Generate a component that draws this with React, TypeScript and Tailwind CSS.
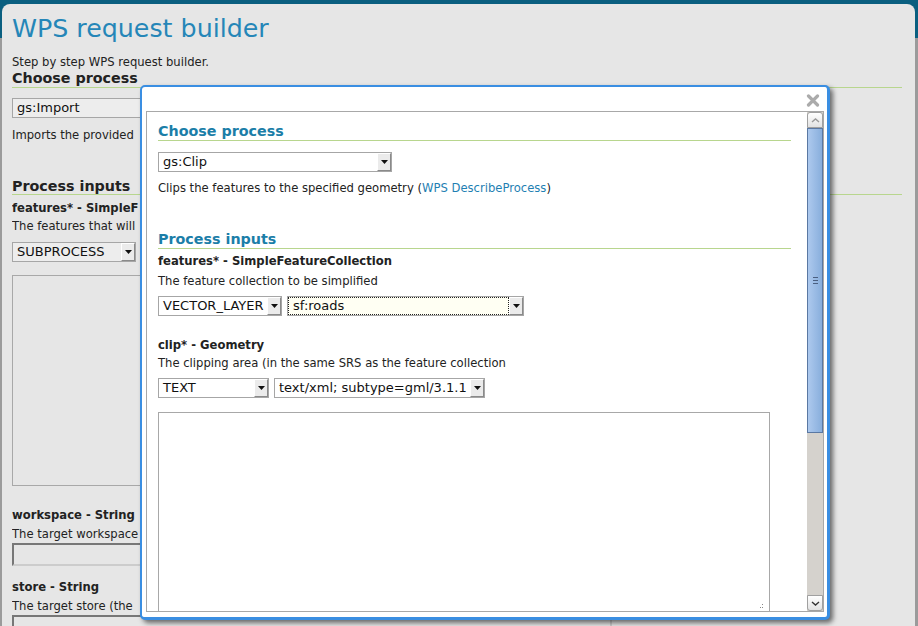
import React from "react";

function Arrow() {
  return (
    <div className="flex h-full w-[14px] shrink-0 items-center justify-center border border-t-white border-l-white border-r-[#8a8a8a] border-b-[#8a8a8a] bg-[#ebebeb]">
      <svg width="7" height="4" viewBox="0 0 7 4">
        <path d="M0 0h7L3.5 4z" fill="#111" />
      </svg>
    </div>
  );
}

function Select({ className, text, focus, bg }: { className: string; text: string; focus?: boolean; bg?: string }) {
  return (
    <div className={`flex h-[20px] shrink-0 border border-[#a6a6a6] ${bg ?? "bg-white"} ${className}`}>
      <div
        className={`min-w-0 flex-1 overflow-hidden whitespace-nowrap pl-[4px] text-[13px] leading-[16px] text-[#111] ${
          focus ? "border border-dotted border-[#222] bg-[#fffff3] pl-[3px]" : "pt-px"
        }`}
      >
        {text}
      </div>
      <Arrow />
    </div>
  );
}

function ScrollBar() {
  return (
    <div className="flex w-[16px] shrink-0 flex-col bg-[#d5d2cd]">
      <div className="flex h-[16px] shrink-0 items-center justify-center rounded-t-[3px] border border-[#a0a0a0] bg-gradient-to-b from-white to-[#e2e2e2]">
        <svg width="9" height="5" viewBox="0 0 9 5">
          <path d="M1 4L4.5 1L8 4" stroke="#9a9a9a" strokeWidth="1.4" fill="none" />
        </svg>
      </div>
      <div className="flex h-[305px] shrink-0 items-center justify-center border border-[#5a78a2] bg-gradient-to-r from-[#adc9ee] to-[#88aedc]">
        <div className="flex w-[5px] flex-col gap-[2px]">
          <div className="h-px bg-[#4a5f80]" />
          <div className="h-px bg-[#4a5f80]" />
          <div className="h-px bg-[#4a5f80]" />
        </div>
      </div>
      <div className="flex-1" />
      <div className="flex h-[16px] shrink-0 items-center justify-center rounded-b-[3px] border border-[#a0a0a0] bg-gradient-to-b from-white to-[#e2e2e2]">
        <svg width="9" height="5" viewBox="0 0 9 5">
          <path d="M1 1L4.5 4L8 1" stroke="#333" strokeWidth="1.4" fill="none" />
        </svg>
      </div>
    </div>
  );
}

function Clip({ className, children }: { className: string; children: React.ReactNode }) {
  return <p className={`w-[128px] overflow-hidden whitespace-nowrap leading-[16px] ${className}`}>{children}</p>;
}

export default function App() {
  return (
    <div className="relative flex h-[626px] w-[918px] overflow-hidden bg-[linear-gradient(to_bottom,#0a5f80_0px,#0a5f80_38px,#9b9b9b_38px)] font-['DejaVu_Sans',sans-serif] text-[11.6px] text-[#222]">
      {/* background page */}
      <div className="ml-[2px] mt-[4px] flex h-[700px] w-[913px] flex-col rounded-t-[8px] bg-[#e6e6e6] pl-[10px] pr-[13px]">
        <h1 className="mt-[10px] text-[25.3px] leading-[30px] text-[#2586b8]">WPS request builder</h1>
        <p className="mt-[11px] leading-[14px]">Step by step WPS request builder.</p>
        <h2 className="h-[19px] border-b border-[#b8d68e] text-[14.3px] font-bold leading-[18px] text-[#222]">Choose process</h2>
        <Select className="mt-[10px] w-[300px]" text="gs:Import" bg="bg-[#ededed]" />
        <Clip className="mt-[9px]">Imports the provided</Clip>
        <h2 className="mt-[34px] h-[18px] border-b border-[#b8d68e] text-[14.3px] font-bold leading-[18px] text-[#222]">Process inputs</h2>
        <Clip className="mt-[5px] font-bold text-[#222]">features* - SimpleF</Clip>
        <Clip className="mt-[2px]">The features that will</Clip>
        <Select className="mt-[8px] w-[124px]" text="SUBPROCESS" bg="bg-[#ededed]" />
        <div className="mt-[13px] h-[211px] w-[600px] shrink-0 border border-[#a8a8a8]" />
        <Clip className="mt-[21px] font-bold text-[#222]">workspace - String</Clip>
        <Clip className="mt-[3px]">The target workspace</Clip>
        <div className="mt-px h-[23px] w-[600px] shrink-0 border-2 border-t-[#777] border-l-[#777] border-r-[#ccc] border-b-[#ccc]" />
        <Clip className="mt-[13px] font-bold text-[#222]">store - String</Clip>
        <Clip className="mt-[3px]">The target store (the</Clip>
        <div className="mt-px h-[23px] w-[600px] shrink-0 border-2 border-t-[#777] border-l-[#777] border-r-[#ccc] border-b-[#ccc]" />
      </div>
      <div className="w-[3px]" />

      {/* modal dialog */}
      <div className="absolute left-[140px] top-[85px] flex h-[535px] w-[690px] flex-col rounded-[5px] border-2 border-b-[3px] border-r-[3px] border-[#3a8ee2] bg-white pl-[4px] shadow-[3px_3px_5px_rgba(0,0,0,0.55)]">
        <div className="absolute right-[7px] top-[7px]">
          <svg width="14" height="13" viewBox="0 0 14 13">
            <path d="M2.5 2L11.5 11M11.5 2L2.5 11" stroke="#ababab" strokeWidth="3.2" strokeLinecap="round" />
          </svg>
        </div>
        <div className="mt-[24px] flex h-[501px] w-[678px] border border-[#a8a8a8]">
          <div className="flex min-w-0 flex-1 flex-col overflow-hidden pl-[11px] pr-[16px] pt-[10px]">
            <h2 className="h-[19px] shrink-0 border-b border-[#b8d68e] text-[14.3px] font-bold leading-[18px] text-[#1b7ea8]">Choose process</h2>
            <Select className="mt-[11px] w-[234px]" text="gs:Clip" />
            <p className="mt-[8px] leading-[16px]">
              Clips the features to the specified geometry (<span className="text-[#1f7fb3]">WPS DescribeProcess</span>)
            </p>
            <h2 className="mt-[34px] h-[19px] shrink-0 border-b border-[#b8d68e] text-[14.3px] font-bold leading-[18px] text-[#1b7ea8]">Process inputs</h2>
            <p className="mt-[4px] font-bold leading-[16px] text-[#222]">features* - SimpleFeatureCollection</p>
            <p className="mt-[4px] leading-[16px]">The feature collection to be simplified</p>
            <div className="mt-[7px] flex gap-[5px]">
              <Select className="w-[124px]" text="VECTOR_LAYER" />
              <Select className="w-[237px]" text="sf:roads" focus />
            </div>
            <p className="mt-[21px] font-bold leading-[16px] text-[#222]">clip* - Geometry</p>
            <p className="mt-[2px] leading-[16px]">The clipping area (in the same SRS as the feature collection</p>
            <div className="mt-[7px] flex gap-[5px]">
              <Select className="w-[111px]" text="TEXT" />
              <Select className="w-[211px]" text="text/xml; subtype=gml/3.1.1" />
            </div>
            <div className="relative mt-[14px] h-[200px] w-[612px] shrink-0 border border-[#a8a8a8]">
              <svg className="absolute bottom-[2px] right-[5px]" width="5" height="5" viewBox="0 0 5 5">
                <rect x="3" y="0" width="1" height="1" fill="#888" />
                <rect x="1" y="3" width="1" height="1" fill="#888" />
                <rect x="3" y="3" width="1" height="1" fill="#888" />
              </svg>
            </div>
          </div>
          <ScrollBar />
        </div>
      </div>
    </div>
  );
}
